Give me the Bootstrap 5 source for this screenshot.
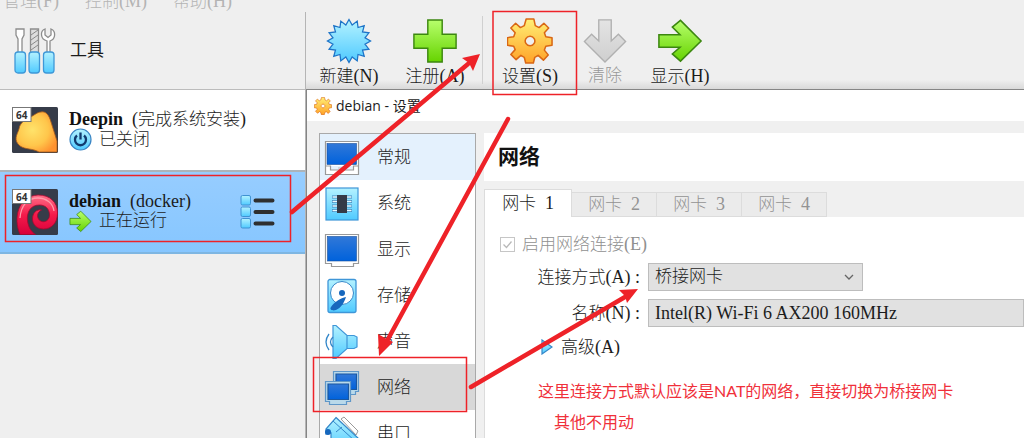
<!DOCTYPE html>
<html lang="zh-CN">
<head>
<meta charset="utf-8">
<meta name="viewport" content="width=device-width, initial-scale=1">
<title>debian - 设置</title>
<link href="https://cdn.jsdelivr.net/npm/bootstrap@5.3.0/dist/css/bootstrap.min.css" rel="stylesheet">
<style>
body{font-family:"Liberation Serif","Noto Sans CJK SC",serif;font-size:17px;font-weight:300;line-height:20px;color:#1c1c1c;background:#efefef}
svg{display:block;flex:none}
.latin{font-family:"Liberation Serif",serif;font-size:18px}
.menu-strip{height:12px;gap:26px;padding-left:3px;color:#b4b4b4;flex:none}
.menu-strip a{color:inherit;text-decoration:none;white-space:nowrap}
.side{width:306px;border-right:1px solid #b5b5b5}
.tools-row{height:78px;padding-left:13px;gap:13px;border-bottom:1px solid #bcbcbc}
.vm{height:82px;padding-left:12px;gap:11px;background:#fff;border-bottom:2px solid #adb4ba}
.vm.chosen{background:linear-gradient(#97cdff,#86c6ff);border-bottom-color:#7eb6e2}
.vm b{font-weight:700;color:#111}
.vm-text{padding-bottom:2px}
.vm-state{gap:7px;height:20px}
.vm-list{margin:0 29px 0 auto}
.toolbar-row{height:77px;background:linear-gradient(#efefef 88%,#d9d9d9)}
.tool{width:86px;padding:6px 0 0;border:0;background:none;color:#1c1c1c;font-weight:300;white-space:nowrap}
.tool.slim{width:64px}
.tool:disabled{color:#999}
.tool svg{margin:0 auto 2px}
.split{width:1px;height:68px;margin:4px 4px 0;background:#d0d0d0}
.dialog{border-top:1px solid #858585;border-left:1px solid #858585;background:#f0f0f0}
.title-row{height:31px;padding-left:7px;gap:4px;background:#fff;font:400 14px/20px "Open Sans","Noto Sans CJK SC",sans-serif}
.dialog-body{padding:12px 0 0 12px;gap:8px}
.pages{width:157px;border:1px solid #a9a9a9;background:#fff;flex:none}
.pages a{height:46px;padding:2px 0 0 4px;gap:17px;color:#1c1c1c;text-decoration:none;flex:none}
.pages a.hot{background:#e4f1fd}
.pages a.chosen{background:#d8d8d8}
.page-head{height:48px;padding-left:14px;background:#fff}
.page-head h1{font-size:21px;line-height:28px;font-weight:700;margin:0;color:#111}
.tabs{margin-top:8px;height:28px;padding:0}
.tabs button{height:25px;padding:0;width:85px;border:1px solid #dcdcdc;border-left:0;background:#ebebeb;color:#939393;font-weight:300}
.tabs button.on{height:28px;width:88px;background:#fff;border-left:1px solid #dcdcdc;border-bottom:0;color:#1c1c1c}
.pane{border-left:1px solid #dcdcdc;background:#fff;padding:12px 0 0 15px}
.pane .check-row{height:30px;gap:7px;color:#909090}
.pane input{appearance:none;width:15px;height:15px;border:1px solid #c6c6c6;margin:0;background:#fff url("data:image/svg+xml,%3Csvg xmlns='http://www.w3.org/2000/svg' viewBox='0 0 13 13'%3E%3Cpath d='M2.5 6.5l3 3 5-6' fill='none' stroke='%23b8b8b8' stroke-width='1.3'/%3E%3C/svg%3E")}
.field{height:36px;gap:8px}
.field label{width:140px;text-align:right;white-space:nowrap}
.field select{height:28px;padding:0 24px 0 6px;border:1px solid #bdbdbd;border-radius:0;background-color:#e1e1e1;color:#1c1c1c;appearance:none;font-weight:300;font-size:17px;line-height:20px}
.field .mode{width:215px;background-image:url("data:image/svg+xml,%3Csvg xmlns='http://www.w3.org/2000/svg' viewBox='0 0 10 10'%3E%3Cpath d='M1 3l4 4 4-4' fill='none' stroke='%23666' stroke-width='1.3'/%3E%3C/svg%3E");background-repeat:no-repeat;background-size:10px;background-position:right 8px center}
.field select.latin{font-size:18px}
.more{height:32px;padding:0;margin-left:41px;gap:8px;border:0;background:none;color:#1c1c1c;font-weight:300}
.remark{margin:12px 0 0 38px;font:400 16px/31px Lato,"Noto Sans CJK SC",sans-serif;color:#f0303a;white-space:nowrap}
.remark span{padding-left:16px}
.marks{left:0;top:0;pointer-events:none}
</style>
</head>
<body class="vh-100 overflow-hidden position-relative d-flex flex-column">
<svg width="0" height="0" class="position-absolute" aria-hidden="true">
<defs>
<linearGradient id="sky" x2="0" y2="1"><stop stop-color="#b4f2ff"/><stop offset="1" stop-color="#4fcaff"/></linearGradient>
<linearGradient id="leaf" x2="0" y2="1"><stop stop-color="#b7ff6c"/><stop offset="1" stop-color="#66d300"/></linearGradient>
<linearGradient id="sun" x2="0" y2="1"><stop stop-color="#ffef75"/><stop offset="1" stop-color="#ffa228"/></linearGradient>
<linearGradient id="ash" x2="0" y2="1"><stop stop-color="#e4e4e4"/><stop offset="1" stop-color="#cfcfcf"/></linearGradient>
<linearGradient id="screen" x2="0" y2="1"><stop stop-color="#3178d8"/><stop offset="1" stop-color="#0062dc"/></linearGradient>
<linearGradient id="rose" x2="0" y2="1"><stop stop-color="#ff6f88"/><stop offset=".5" stop-color="#f51b4b"/><stop offset="1" stop-color="#d8003a"/></linearGradient>
<radialGradient id="amber" cx=".4" cy=".45" r=".65"><stop stop-color="#ffe36b"/><stop offset=".6" stop-color="#ffc64b"/><stop offset="1" stop-color="#ff9330"/></radialGradient>
<symbol id="cog" viewBox="0 0 48 48"><path fill-rule="evenodd" stroke-linejoin="round" d="M20 1h8l1.500 7 4 2 5-4.500 5 5-4.500 5 1.500 4 6.500 1v8l-6.500 1-1.500 4 4 5-5 5.500-5.500-5-3.500 2-1.500 6h-8l-1.500-6-3.500-2-5 4.500-5.500-5.500 4.500-5-1.500-3.500-6.500-1v-8l6.500-1 1.500-4-4.500-5 5-5 5 4.500 4-2zM24 19a5 5 0 1 0 .1 0z" fill="url(#sun)" stroke="#d96714" stroke-width="1.600"/></symbol>
<symbol id="go" viewBox="0 0 48 48"><path d="M2 17.500H24L16 9.500 24.500 2.500 46 24 24.500 45 16 37.500 24 30.500H2z" fill="url(#leaf)" stroke="#3c8710" stroke-width="1.600"/></symbol>
</defs>
</svg>

<div class="d-flex flex-grow-1 overflow-hidden">
<div class="d-flex flex-column flex-grow-1">
<nav class="menu-strip d-flex align-items-end"><a href="#">管理<span class="latin">(F)</span></a><a href="#">控制<span class="latin">(M)</span></a><a href="#">帮助<span class="latin">(H)</span></a></nav>
<div class="d-flex flex-grow-1">
<aside class="side flex-shrink-0">
<div class="tools-row d-flex align-items-center">
<svg width="44" height="48" viewBox="0 0 44 48"><g fill="#fff" stroke="#8d8d8d" stroke-width="1.300"><path d="M3 2h8v6l-2 4v14H5V12L3 8z"/><path d="M17.500 2h8v24h-8z" fill="#ddd"/><path d="M34 26V14c-7-2-7-10-2-12v6l3 2.500 3-2.500V2c5 2 5 10-1 12v12z"/></g><path d="M18 8l7-5M18 13l7-5M18 18l7-5M18 23l7-5" stroke="#888" stroke-width="1"/><g fill="url(#sky)" stroke="#3e98d8" stroke-width="1.300"><rect x="2" y="25" width="10.500" height="21" rx="3"/><rect x="16" y="25" width="10.500" height="21" rx="3"/><rect x="30.500" y="25" width="10.500" height="21" rx="3"/></g></svg>
<span class="fw-normal">工具</span>
</div>
<div class="vm d-flex align-items-center">
<svg width="46" height="46" viewBox="0 0 46 46"><rect width="46" height="46" rx="1.500" fill="#363c49"/><path d="M29 5c5-1 8 3 10 10l6 19v11H27c-7-4-13-2-19-6-7-6-3-11-1-17 1-8 9-10 15-14 3-2 5-3 7-3z" fill="url(#amber)" stroke="#a65b1b" stroke-width=".8"/><rect x=".5" y=".5" width="18.500" height="14" fill="#fff" stroke="#777"/><text x="4" y="11.500" font-family="Open Sans,sans-serif" font-size="10" font-weight="700" fill="#333">64</text></svg>
<div class="vm-text"><div><b class="latin">Deepin</b><span class="latin">&nbsp; (</span>完成系统安装<span class="latin">)</span></div>
<div class="vm-state d-flex align-items-center"><svg width="23" height="23" viewBox="0 0 23 23"><circle cx="11.500" cy="11.500" r="10.500" fill="url(#sky)" stroke="#3a85c4" stroke-width="1.200"/><path d="M8 7.500a5.500 5.500 0 1 0 7 0M11.500 4.500v7" fill="none" stroke="#113a6e" stroke-width="2.300"/></svg>已关闭</div></div>
</div>
<div class="vm chosen d-flex align-items-center">
<svg width="46" height="46" viewBox="0 0 46 46"><rect width="46" height="46" rx="1.500" fill="#363c49"/><path d="M8 45.500C1 29 6 7 26 6c12 0 19.500 7 19.500 18 0 10-6 16-14 16-7 0-11-5-11-10 0-6 4-10 9-9-4 2-5 6-3 9 3 5 11 3 11-4 0-6-4-10-10-10-9 0-13 7-12 16 1 6 3 10 8 13.500z" fill="url(#rose)" stroke="#a8062e" stroke-width=".8"/><path d="M8 29C9 16 16 9 26 9c8 0 15 5 16 13" fill="none" stroke="#ff9aa9" stroke-width="1.300"/><rect x=".5" y=".5" width="18.500" height="14" fill="#fff" stroke="#777"/><text x="4" y="11.500" font-family="Open Sans,sans-serif" font-size="10" font-weight="700" fill="#333">64</text></svg>
<div class="vm-text"><div class="latin"><b>debian</b>&nbsp; (docker)</div>
<div class="vm-state d-flex align-items-center"><svg width="23" height="23"><use href="#go"/></svg>正在运行</div></div>
<svg class="vm-list" width="36" height="36" viewBox="0 0 36 36"><g fill="url(#sky)" stroke="#3f92d2"><rect x="1" y="1.500" width="9.500" height="9.500" rx="1.500"/><rect x="1" y="13" width="9.500" height="9.500" rx="1.500"/><rect x="1" y="24.500" width="9.500" height="9.500" rx="1.500"/></g><path d="M15.500 6.500h17M15.500 18h17M15.500 29.500h17" stroke="#2f2f2f" stroke-width="4" stroke-linecap="round"/></svg>
</div>
</aside>

<main class="d-flex flex-column flex-grow-1">
<div class="toolbar-row d-flex align-items-start">
<button class="tool" type="button"><svg width="46" height="46" viewBox="0 0 48 48"><path d="M24 1.500 27.300 7.300 32.600 3.200 33.400 9.900 39.900 8.100 38.100 14.600 44.800 15.400 40.700 20.700 46.500 24 40.700 27.300 44.800 32.600 38.100 33.400 39.900 39.900 33.400 38.100 32.600 44.800 27.300 40.700 24 46.500 20.700 40.700 15.400 44.800 14.600 38.100 8.100 39.900 9.900 33.400 3.200 32.600 7.300 27.300 1.500 24 7.300 20.700 3.200 15.400 9.900 14.600 8.100 8.100 14.600 9.900 15.400 3.200 20.700 7.300z" fill="url(#sky)" stroke="#1d74c8" stroke-width="1.300"/></svg>新建<span class="latin">(N)</span></button>
<button class="tool" type="button"><svg width="46" height="46" viewBox="0 0 48 48"><path d="M16.500 2h15v15H46v14.500H31.500V46h-15V31.500H2V17h14.500z" fill="url(#leaf)" stroke="#3c8710" stroke-width="1.500"/></svg>注册<span class="latin">(A)</span></button>
<div class="split"></div>
<button class="tool" type="button"><svg width="46" height="46"><use href="#cog"/></svg>设置<span class="latin">(S)</span></button>
<button class="tool slim" type="button" disabled><svg width="46" height="46" viewBox="0 0 48 48"><path d="M17.500 2h13v22l7.500-7 7.500 7.500L24 46 2.500 24.500 10 17l7.500 7z" fill="url(#ash)" stroke="#b0b0b0" stroke-width="1.400"/></svg>清除</button>
<button class="tool" type="button"><svg width="46" height="46"><use href="#go"/></svg>显示<span class="latin">(H)</span></button>
</div>

<section class="dialog d-flex flex-column flex-grow-1">
<div class="title-row d-flex align-items-center"><svg width="18" height="18"><use href="#cog"/></svg>debian - 设置</div>
<div class="dialog-body d-flex flex-grow-1">
<nav class="pages d-flex flex-column">
<a class="hot d-flex align-items-center" href="#"><svg width="36" height="36" viewBox="0 0 36 36"><path d="M1.500 1.500h33v33h-33zM1.500 26h5v4h23v-4h5" fill="#fff" stroke="#999" stroke-width="1.200"/><rect x="3" y="3.500" width="29.500" height="21" fill="url(#screen)" stroke="#174f9c" stroke-width=".6"/><path d="M14 28h8" stroke="#bbb"/></svg>常规</a>
<a class="d-flex align-items-center" href="#"><svg width="36" height="36" viewBox="0 0 36 36"><rect x="2" y="2" width="32" height="32" fill="url(#sky)" stroke="#3f96d8" stroke-width="1.200"/><path d="M8 11h20M8 15.500h20M8 20h20M8 24.500h20" stroke="#3c86bd" stroke-width="3"/><path d="M8.500 11h19M8.500 15.500h19M8.500 20h19M8.500 24.500h19" stroke="#e8faff" stroke-width="1.500"/><rect x="13" y="9" width="10" height="18" fill="#343a47"/></svg>系统</a>
<a class="d-flex align-items-center" href="#"><svg width="36" height="36" viewBox="0 0 36 36"><path d="M1.500 2.500h33v29h-5v3h-22v-3h-6z" fill="#fff" stroke="#999" stroke-width="1.200"/><rect x="3.500" y="4.500" width="29" height="24.500" fill="url(#screen)" stroke="#174f9c" stroke-width=".6"/></svg>显示</a>
<a class="d-flex align-items-center" href="#"><svg width="36" height="36" viewBox="0 0 36 36"><rect x="4" y="1.500" width="28" height="33" rx="2" fill="url(#sky)" stroke="#3f96d8" stroke-width="1.300"/><circle cx="18" cy="15" r="11.500" fill="#fff" stroke="#3487c9"/><circle cx="18" cy="15" r="3" fill="#1667bd"/><path d="M22 19c-5 1-12 5-15 10-2 3 2 4 5 3 5-2 8-7 10-13z" fill="#1767bd"/></svg>存储</a>
<a class="d-flex align-items-center" href="#"><svg width="36" height="36" viewBox="0 0 36 36"><path d="M9 1.500h3l11 10h7l3 1.500v10l-3 1.500h-7l-11 10H9zM23 11.500v13" fill="url(#sky)" stroke="#3f96d8" stroke-width="1.200"/><path d="M9 13q-5 5 0 10M5 10q-6 8 0 16" fill="none" stroke="#3487c9" stroke-width="1.300"/></svg>声音</a>
<a class="chosen d-flex align-items-center" href="#"><svg width="36" height="36" viewBox="0 0 36 36"><g stroke-width="1.200"><path d="M9.500 1.500h25v20h-3v3h-19v-3h-3z" fill="#b9d9ea" stroke="#5f97c8"/><path d="M12 4h20.500v15.500H12z" fill="url(#screen)" stroke="#1b579f"/><path d="M1.500 11.500h25v20h-4v3h-17v-3h-4z" fill="#b9d9ea" stroke="#5f97c8"/><path d="M4 14h20.500v15.500H4z" fill="url(#screen)" stroke="#1b579f"/></g></svg>网络</a>
<a class="d-flex align-items-center" href="#"><svg width="36" height="36" viewBox="0 0 36 36"><path d="M17 3l3-2 14 14-2 4z" fill="#fff" stroke="#999"/><path d="M12 1.500L34 22v4l-4-2v11H7V17l-5 1v-5z" fill="url(#sky)" stroke="#3487c9" stroke-width="1.200"/><path d="M9 5l22 20M12 16l6-5" fill="none" stroke="#3487c9"/><circle cx="4" cy="16" r="3" fill="#1667bd"/></svg>串口</a>
</nav>
<div class="flex-grow-1 d-flex flex-column">
<div class="page-head d-flex align-items-center"><h1>网络</h1></div>
<div class="tabs d-flex align-items-end" role="tablist"><button class="on" role="tab" type="button">网卡 <span class="latin">&nbsp;1</span></button><button role="tab" type="button">网卡 <span class="latin">&nbsp;2</span></button><button role="tab" type="button">网卡 <span class="latin">&nbsp;3</span></button><button role="tab" type="button">网卡 <span class="latin">&nbsp;4</span></button></div>
<form class="pane flex-grow-1">
<div class="check-row d-flex align-items-center"><input type="checkbox" id="enable" checked disabled><label for="enable">启用网络连接<span class="latin">(E)</span></label></div>
<div class="field d-flex align-items-center"><label for="mode">连接方式<span class="latin">(A) :</span></label><select id="mode" class="mode"><option>桥接网卡</option></select></div>
<div class="field d-flex align-items-center"><label for="adapter">名称<span class="latin">(N) :</span></label><select id="adapter" class="latin flex-grow-1"><option>Intel(R) Wi-Fi 6 AX200 160MHz</option></select></div>
<button class="more d-flex align-items-center" type="button"><svg width="12" height="16" viewBox="0 0 12 16"><path d="M1 1l10 7-10 7z" fill="url(#sky)" stroke="#3487c9" stroke-width="1.200"/></svg><span>高级<span class="latin">(A)</span></span></button>
<p class="remark">这里连接方式默认应该是NAT的网络，直接切换为桥接网卡<br><span>其他不用动</span></p>
</form>
</div>
</div>
</section>
</main>
</div>
</div>
</div>

<!-- Red guide boxes and arrows laid over the windows -->
<svg class="marks position-absolute" width="1024" height="438" viewBox="0 0 1024 438" aria-hidden="true">
<g fill="none" stroke="#ee2228" stroke-width="1.500"><path d="M5.500 175.500h285v66h-285zM493 11.500h83.500v83H493zM313.500 357.500h153v54h-153z"/></g>
<g fill="none" stroke="#ee2228" stroke-width="4.500" stroke-linecap="round"><path d="M292 212L468 64M508 119L387 341M471 387L625 297"/></g>
<path fill="#ee2228" d="M480 54L473 71 469 63 462 58zM379 356L378 334 385 338 393 342zM638 289L627 303 625 296 619 290z"/>
</svg>
<script src="https://cdn.jsdelivr.net/npm/bootstrap@5.3.0/dist/js/bootstrap.bundle.min.js"></script>
</body>
</html>
